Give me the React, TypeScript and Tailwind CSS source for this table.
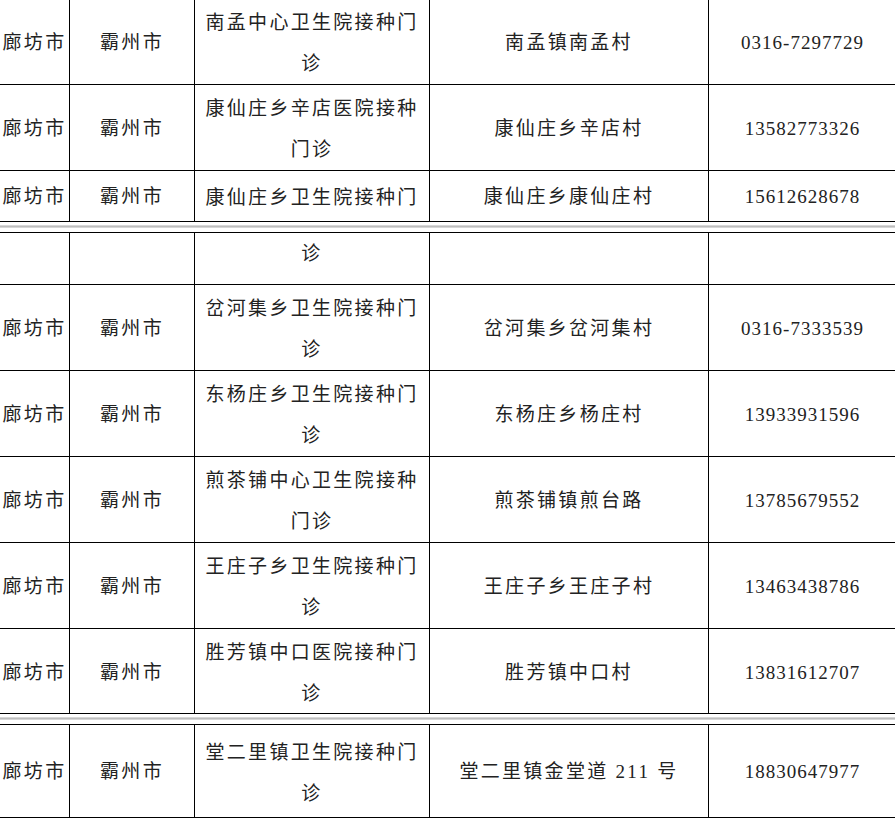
import React from 'react';

type Row = {
  city: string;
  county: string;
  name: string[];
  addr: string;
  phone: string;
  h: string;
  top?: boolean;
  alignTop?: boolean;
};

const seg1: Row[] = [
  { city: '廊坊市', county: '霸州市', name: ['南孟中心卫生院接种门', '诊'], addr: '南孟镇南孟村', phone: '0316-7297729', h: 'h-[86px]' },
  { city: '廊坊市', county: '霸州市', name: ['康仙庄乡辛店医院接种', '门诊'], addr: '康仙庄乡辛店村', phone: '13582773326', h: 'h-[86px]' },
  { city: '廊坊市', county: '霸州市', name: ['康仙庄乡卫生院接种门'], addr: '康仙庄乡康仙庄村', phone: '15612628678', h: 'h-[51px]' },
];

const seg2: Row[] = [
  { city: '', county: '', name: ['诊'], addr: '', phone: '', h: 'h-[53px]', top: true, alignTop: true },
  { city: '廊坊市', county: '霸州市', name: ['岔河集乡卫生院接种门', '诊'], addr: '岔河集乡岔河集村', phone: '0316-7333539', h: 'h-[86px]' },
  { city: '廊坊市', county: '霸州市', name: ['东杨庄乡卫生院接种门', '诊'], addr: '东杨庄乡杨庄村', phone: '13933931596', h: 'h-[86px]' },
  { city: '廊坊市', county: '霸州市', name: ['煎茶铺中心卫生院接种', '门诊'], addr: '煎茶铺镇煎台路', phone: '13785679552', h: 'h-[86px]' },
  { city: '廊坊市', county: '霸州市', name: ['王庄子乡卫生院接种门', '诊'], addr: '王庄子乡王庄子村', phone: '13463438786', h: 'h-[86px]' },
  { city: '廊坊市', county: '霸州市', name: ['胜芳镇中口医院接种门', '诊'], addr: '胜芳镇中口村', phone: '13831612707', h: 'h-[85px]' },
];

const seg3: Row[] = [
  { city: '廊坊市', county: '霸州市', name: ['堂二里镇卫生院接种门', '诊'], addr: '堂二里镇金堂道 211 号', phone: '18830647977', h: 'h-[94px]', top: true },
];

const TableRow: React.FC<{ row: Row }> = ({ row }) => {
  const cell = 'flex items-center justify-center text-center border-r border-black pt-[3px]';
  return (
    <div
      className={`grid grid-cols-[70px_125px_235px_279px_1fr] border-b border-black ${row.h} ${row.top ? 'border-t' : ''}`}
    >
      <div className={cell}>{row.city}</div>
      <div className={cell}>{row.county}</div>
      <div
        className={`flex flex-col items-center text-center border-r border-black ${
          row.alignTop ? 'justify-start' : 'justify-center pt-[3px]'
        }`}
      >
        {row.name.map((line, i) => (
          <div key={i} className="leading-[41px]">
            {line}
          </div>
        ))}
      </div>
      <div className={cell}>{row.addr}</div>
      <div className={`${cell} tracking-[1px]`}>{row.phone}</div>
    </div>
  );
};

const PageBreak: React.FC = () => (
  <div className="h-[10px] pt-[3px]">
    <div className="h-[3px] bg-[#bdbdbd] border-y border-[#d6d6d6]" />
  </div>
);

export default function App() {
  return (
    <div className="w-[895px] h-[818px] overflow-hidden bg-white">
      <div
        className="w-[897px] -mt-px text-[19px] tracking-[2.3px] text-[#222]"
        style={{ fontFamily: '"Liberation Serif", "Noto Sans CJK SC", serif' }}
      >
        {seg1.map((r, i) => (
          <TableRow key={i} row={r} />
        ))}
        <PageBreak />
        {seg2.map((r, i) => (
          <TableRow key={i} row={r} />
        ))}
        <PageBreak />
        {seg3.map((r, i) => (
          <TableRow key={i} row={r} />
        ))}
      </div>
    </div>
  );
}
